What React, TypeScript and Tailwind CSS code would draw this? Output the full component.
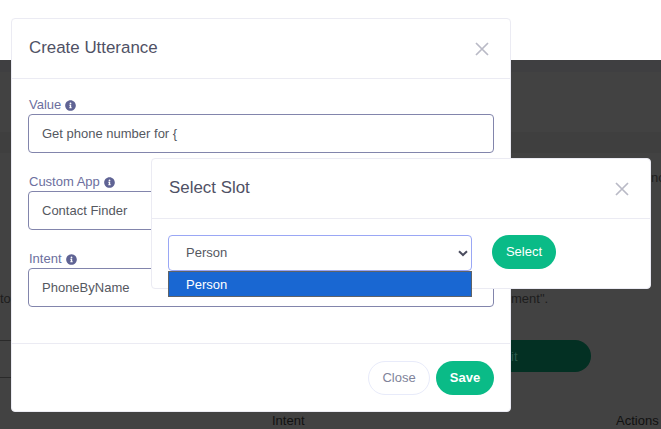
import { FaInfoCircle } from "react-icons/fa";

function Cross() {
  return (
    <svg width="14" height="14" viewBox="0 0 14 14" className="block">
      <path d="M1 1L13 13M13 1L1 13" stroke="#b9bac6" strokeWidth="1.7" fill="none" />
    </svg>
  );
}

function Field({ label, value, gap }: { label: string; value: string; gap: string }) {
  return (
    <div className={gap}>
      <div className="flex h-[19px] items-end gap-[4px] pl-[1px] text-[13px] leading-[18px] text-[#6c6f9e]">
        <span>{label}</span>
        <FaInfoCircle className="mb-[3px] h-[11px] w-[11px] text-[#5f6394]" />
      </div>
      <div className="flex h-[39px] items-center rounded-[4px] border border-[#8285ac] pl-[13px] text-[13px] text-[#55585f]">
        {value}
      </div>
    </div>
  );
}

export default function App() {
  return (
    <div className="relative h-[429px] w-[661px] overflow-hidden bg-white font-['Liberation_Sans',Arial,sans-serif]">
      <div className="mt-[60px] h-[369px] bg-[#424242]">
        <div className="h-[12px] bg-[#3f3f41]" />
        <div className="h-[60px]" />
        <div className="h-[21px] bg-[#3f3f3f]" />
        <div className="h-[170px]" />
      </div>

      {/* page content dimmed behind the dialogs */}
      <div className="absolute left-0 top-[340px] h-px w-[12px] bg-[#2a2a2a]" />
      <div className="absolute left-0 top-[377px] h-px w-[12px] bg-[#2a2a2a]" />
      <span className="absolute left-0 top-[291px] text-[13px] leading-[16px] text-[#1d1d1d]">to</span>
      <span className="absolute left-[511px] top-[291px] text-[13px] leading-[16px] text-[#1d1d1d]">ment".</span>
      <span className="absolute left-[651px] top-[170px] text-[13px] leading-[16px] text-[#1d1d1d]">no</span>
      <div className="absolute left-[511px] top-[340px] flex h-[32px] w-[80px] items-center rounded-r-[16px] bg-[#033023] pt-[1px] text-[13px] text-[#2a5a4c]">
        <span>it</span>
      </div>
      <span className="absolute left-[272px] top-[412px] text-[13px] leading-[18px] text-[#111]">Intent</span>
      <span className="absolute left-[616px] top-[412px] text-[13px] leading-[18px] text-[#111]">Actions</span>

      {/* Create Utterance dialog */}
      <div className="absolute left-[11px] top-[18px] flex h-[394px] w-[500px] flex-col rounded-[4px] border border-[#ebebf3] bg-white">
        <div className="flex h-[60px] shrink-0 items-center justify-between border-b border-[#ebebf3] pl-[17px] pr-[21px]">
          <h2 className="-mt-[2px] text-[16.9px] text-[#4f5165]">Create Utterance</h2>
          <Cross />
        </div>
        <div className="h-[264px] shrink-0 px-[16px] pt-[16px]">
          <Field label="Value" value="Get phone number for {" gap="" />
          <Field label="Custom App" value="Contact Finder" gap="mt-[19px]" />
          <Field label="Intent" value="PhoneByName" gap="mt-[19px]" />
        </div>
        <div className="flex flex-1 items-start justify-end gap-[6px] border-t border-[#ebebf3] pr-[16px] pt-[17px]">
          <button className="h-[34px] w-[62px] rounded-full border border-[#e8ebfa] text-[13px] text-[#80839a]">Close</button>
          <button className="h-[34px] w-[58px] rounded-full bg-[#0abb87] text-[13px] font-bold text-white">Save</button>
        </div>
      </div>

      {/* Select Slot dialog */}
      <div className="absolute left-[151px] top-[158px] h-[131px] w-[500px] rounded-[4px] border border-[#ebebf3] bg-white">
        <div className="flex h-[60px] items-center justify-between border-b border-[#ebebf3] pl-[17px] pr-[21px]">
          <h2 className="-mt-[2px] text-[16.9px] text-[#4f5165]">Select Slot</h2>
          <Cross />
        </div>
        <div className="flex items-start gap-[20px] pl-[16px] pt-[16px]">
          <div className="relative w-[304px]">
            <div className="flex h-[36px] items-center justify-between rounded-[4px] border border-[#9aa7f5] pl-[17px] pr-[3px] text-[13px] text-[#55585f]">
              <span>Person</span>
              <svg width="10" height="7" viewBox="0 0 10 7">
                <path d="M1 1.2L5 5L9 1.2" stroke="#4a4c5e" strokeWidth="2" fill="none" />
              </svg>
            </div>
            <div className="absolute left-0 top-[36px] flex h-[26px] w-full items-center border border-[#5f6368] bg-[#1967d2] pl-[17px] pt-[1px] text-[13px] text-white">
              Person
            </div>
          </div>
          <button className="h-[34px] w-[64px] rounded-full bg-[#0abb87] pb-[1px] text-[13px] font-medium text-white">Select</button>
        </div>
      </div>
    </div>
  );
}
